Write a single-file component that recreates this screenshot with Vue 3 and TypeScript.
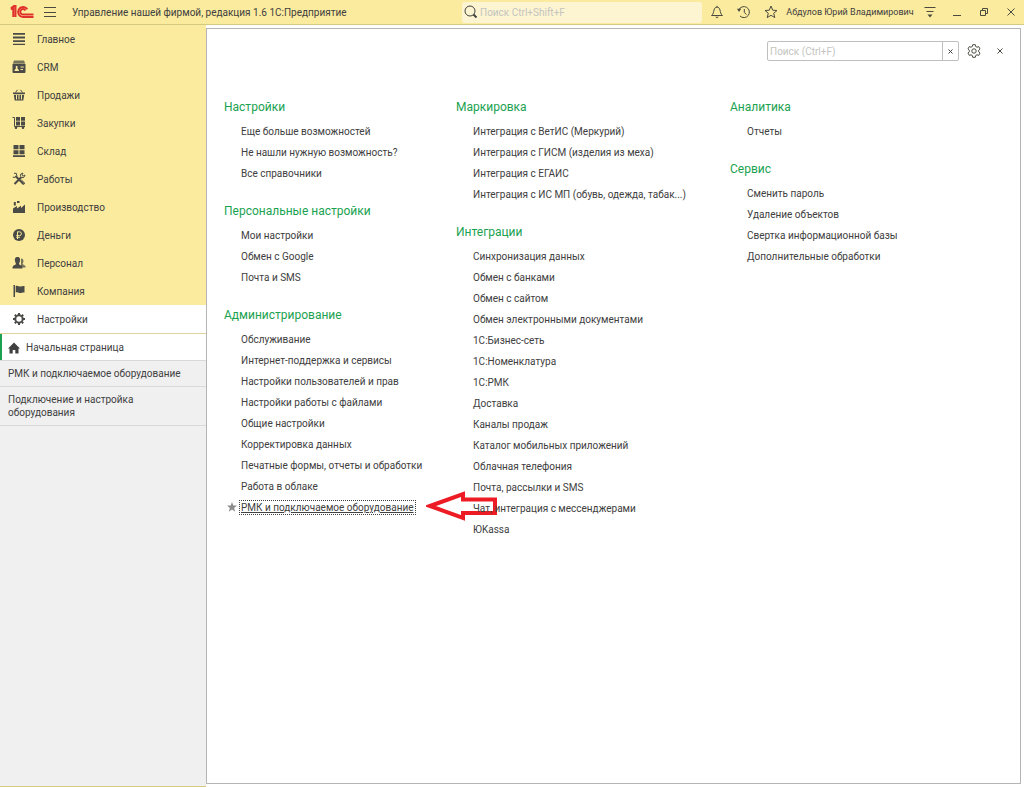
<script setup lang="ts">
import { ref } from 'vue'

interface Section {
  id: string
  title: string
}
interface Group {
  title: string
  items: string[]
}

const sections: Section[] = [
  { id: 'main', title: 'Главное' },
  { id: 'crm', title: 'CRM' },
  { id: 'sales', title: 'Продажи' },
  { id: 'purchases', title: 'Закупки' },
  { id: 'stock', title: 'Склад' },
  { id: 'works', title: 'Работы' },
  { id: 'production', title: 'Производство' },
  { id: 'money', title: 'Деньги' },
  { id: 'staff', title: 'Персонал' },
  { id: 'company', title: 'Компания' },
  { id: 'settings', title: 'Настройки' },
]

const columns: Group[][] = [
  [
    {
      title: 'Настройки',
      items: ['Еще больше возможностей', 'Не нашли нужную возможность?', 'Все справочники'],
    },
    {
      title: 'Персональные настройки',
      items: ['Мои настройки', 'Обмен с Google', 'Почта и SMS'],
    },
    {
      title: 'Администрирование',
      items: [
        'Обслуживание',
        'Интернет-поддержка и сервисы',
        'Настройки пользователей и прав',
        'Настройки работы с файлами',
        'Общие настройки',
        'Корректировка данных',
        'Печатные формы, отчеты и обработки',
        'Работа в облаке',
        'РМК и подключаемое оборудование',
      ],
    },
  ],
  [
    {
      title: 'Маркировка',
      items: [
        'Интеграция с ВетИС (Меркурий)',
        'Интеграция с ГИСМ (изделия из меха)',
        'Интеграция с ЕГАИС',
        'Интеграция с ИС МП (обувь, одежда, табак...)',
      ],
    },
    {
      title: 'Интеграции',
      items: [
        'Синхронизация данных',
        'Обмен с банками',
        'Обмен с сайтом',
        'Обмен электронными документами',
        '1С:Бизнес-сеть',
        '1С:Номенклатура',
        '1С:РМК',
        'Доставка',
        'Каналы продаж',
        'Каталог мобильных приложений',
        'Облачная телефония',
        'Почта, рассылки и SMS',
        'Чат, интеграция с мессенджерами',
        'ЮKassa',
      ],
    },
  ],
  [
    { title: 'Аналитика', items: ['Отчеты'] },
    {
      title: 'Сервис',
      items: ['Сменить пароль', 'Удаление объектов', 'Свертка информационной базы', 'Дополнительные обработки'],
    },
  ],
]

const activeSection = ref('settings')
const selectedItem = ref('РМК и подключаемое оборудование')
const globalQuery = ref('')
const commandQuery = ref('')
</script>

<template>
  <div class="app">
    <header class="topbar">
      <div class="brand">
        <svg class="logo" width="24" height="14" viewBox="0 0 24 14" aria-label="1С">
          <path d="M1 4.5L3.3 2.6V12M5.5 12V1H4L1 3.4" />
          <path d="M17.3 4.2A5 5 0 1 0 13 12H23.5" />
          <path d="M15.3 5.4A2.7 2.7 0 1 0 13 9.5H23.5" />
        </svg>
        <button class="icon-btn burger" type="button" aria-label="Меню">
          <svg width="12" height="12" viewBox="0 0 12 12"><path d="M0 1.5H12M0 6.5H12M0 10.5H12" /></svg>
        </button>
        <span class="app-title">Управление нашей фирмой, редакция 1.6 1С:Предприятие</span>
      </div>
      <label class="global-search">
        <svg width="14" height="14" viewBox="0 0 14 14">
          <circle cx="6" cy="6" r="5" />
          <path class="handle" d="M9.5 9.5L12.5 12.5" />
        </svg>
        <input v-model="globalQuery" type="text" placeholder="Поиск Ctrl+Shift+F" aria-label="Глобальный поиск" />
      </label>
      <div class="actions">
        <button class="icon-btn" type="button" aria-label="Уведомления">
          <svg width="14" height="14" viewBox="0 0 14 14">
            <path d="M1.5 10.5C3.5 9 3.5 7 4 5C4.5 3 5.5 2.2 7 2.2S9.5 3 10 5C10.5 7 10.5 9 12.5 10.5ZM7 0.8V2" />
            <path class="solid" d="M5.2 11.7H8.8L7 13.3Z" />
          </svg>
        </button>
        <button class="icon-btn" type="button" aria-label="История">
          <svg width="14" height="14" viewBox="0 0 14 14">
            <path d="M1.8 5A5.5 5.5 0 1 1 3 11M7.3 4V7.5L9.5 9.5" />
            <path class="solid" d="M0 3.8H4.2L2 7Z" />
          </svg>
        </button>
        <button class="icon-btn" type="button" aria-label="Избранное">
          <svg width="14" height="14" viewBox="0 0 14 14">
            <path d="M7 1L8.7 5.2L13 5.5L9.7 8.3L10.8 12.6L7 10.3L3.2 12.6L4.3 8.3L1 5.5L5.3 5.2Z" />
          </svg>
        </button>
        <button class="user" type="button">Абдулов Юрий Владимирович</button>
        <button class="icon-btn" type="button" aria-label="Сервис и настройки">
          <svg width="12" height="12" viewBox="0 0 12 12">
            <path d="M0.5 1.5H11.5M2.5 5.5H9.5" /><path class="solid" d="M3.5 8.5H8.5L6 11.5Z" />
          </svg>
        </button>
        <button class="icon-btn" type="button" aria-label="Свернуть">
          <svg width="8" height="12" viewBox="0 0 8 12"><path d="M0 9.5H8" /></svg>
        </button>
        <button class="icon-btn" type="button" aria-label="Восстановить">
          <svg width="8" height="8" viewBox="0 0 8 8"><path d="M0.5 2.5H5.5V7.5H0.5ZM2.5 2.5V0.5H7.5V5.5H5.5" /></svg>
        </button>
        <button class="icon-btn" type="button" aria-label="Закрыть">
          <svg width="8" height="8" viewBox="0 0 8 8"><path d="M0.5 0.5L7.5 7.5M7.5 0.5L0.5 7.5" /></svg>
        </button>
      </div>
    </header>

    <div class="body">
      <aside class="sidebar">
        <nav class="sections">
          <button
            v-for="s in sections"
            :key="s.id"
            type="button"
            class="section"
            :class="{ active: s.id === activeSection }"
            @click="activeSection = s.id"
          >
            <svg width="14" height="14" viewBox="0 0 14 14">
              <path v-if="s.id === 'main'" d="M1 1H13V2.8H1ZM1 4.6H13V6.4H1ZM1 8.2H13V10H1ZM1 11.8H13V13H1Z" />
              <template v-else-if="s.id === 'crm'">
                <path class="dim" d="M2 0.5H12L13 3H1Z" />
                <path
                  fill-rule="evenodd"
                  d="M1.5 3.5H12.5Q13.5 3.5 13.5 4.5V12Q13.5 13 12.5 13H1.5Q0.5 13 0.5 12V4.5Q0.5 3.5 1.5 3.5ZM2.5 11H7C7 9.5 6 9 5.5 8.7V6H3.8V8.7C3.2 9 2.5 9.5 2.5 11ZM8.5 6.5V7.5H11.8V6.5ZM8.5 9V10H11V9Z"
                />
              </template>
              <template v-else-if="s.id === 'sales'">
                <path d="M1 4.5H13V6H1ZM1.8 6.7H12.2L11.3 12.5H2.7Z" />
                <path class="line" d="M3.5 4.5L5.5 1.8M10.5 4.5L8.5 1.8" />
                <path class="cut" d="M4.5 7V11.5M7 7V11.5M9.5 7V11.5" />
              </template>
              <template v-else-if="s.id === 'purchases'">
                <path class="line" d="M0.5 1.5H2.5V10.5H13" />
                <path d="M4 1H8V4.8H4ZM9 1H13V4.8H9ZM4 5.6H8V9.4H4ZM9 5.6H13V9.4H9Z" />
                <circle cx="4" cy="11.7" r="1.3" /><circle cx="11" cy="11.7" r="1.3" />
              </template>
              <path
                v-else-if="s.id === 'stock'"
                d="M1.5 1H6.5V5.3H1.5ZM7.5 1H12.5V5.3H7.5ZM1.5 6.2H6.5V10.3H1.5ZM7.5 6.2H12.5V10.3H7.5ZM1 11.3H13V13H1Z"
              />
              <template v-else-if="s.id === 'works'">
                <path class="thick" d="M3.5 4L11.5 12M2.5 12L9.5 5" />
                <path
                  class="line"
                  d="M0.8 5.2L3 5.4L4.8 3.6L4.2 1.2L2 1.4M8.6 4.4C7.8 2.6 9.2 1 11 1.2L9.8 3L11 4.2L12.9 3C13 5 11.4 6.2 9.6 5.4M9.5 8L12.8 11.2L11.4 12.8"
                />
              </template>
              <template v-else-if="s.id === 'production'">
                <path d="M1 13V8.5L5 6V8.5L9 5.8V8L13 4.5V13Z" />
                <path d="M1.8 2H3.8V5.5H1.8ZM5 1H7.5V3H5Z" />
              </template>
              <template v-else-if="s.id === 'money'">
                <circle cx="7" cy="7" r="6" />
                <path class="cut" d="M5.5 11V3.8H7.5A1.9 1.9 0 0 1 7.5 7.6H4.3M4.3 9.3H8" />
              </template>
              <template v-else-if="s.id === 'staff'">
                <path class="dim" d="M9 2.5Q11.5 2 11.5 5Q11.3 7 10.5 8L13.5 10V11.5H9Z" />
                <path d="M5.5 1C8 1 8.3 3 8 5C7.8 6.5 7 7 7 8.3C8.5 9.3 10.5 9.3 10.5 12.5H0.5C0.5 9.3 2.5 9.3 4 8.3C4 7 3.2 6.5 3 5C2.7 3 3 1 5.5 1Z" />
              </template>
              <path
                v-else-if="s.id === 'company'"
                d="M1.5 1H3V13H1.5ZM3.7 2C6 1 7 3 9 2.5C10.5 2.2 11 1.8 12.5 2V8.5C10.5 8 9.5 9.5 7.5 9C6 8.500 5 8 3.7 8.7Z"
              />
              <template v-else>
                <circle class="gear-ring" cx="7" cy="7" r="3.7" />
                <path class="gear-teeth" d="M7 1V3M7 11V13M1 7H3M11 7H13M2.8 2.8L4 4M10 10L11.2 11.2M2.8 11.2L4 10M10 4L11.2 2.8" />
              </template>
            </svg>
            {{ s.title }}
          </button>
        </nav>
        <nav class="tabs">
          <button type="button" class="tab home">
            <svg width="12" height="12" viewBox="0 0 12 12">
              <path d="M6 0.5L12 6.5H10.5V11.5H7.3V8H4.7V11.5H1.5V6.5H0Z" />
            </svg>
            Начальная страница
          </button>
          <button type="button" class="tab">РМК и подключаемое оборудование</button>
          <button type="button" class="tab">Подключение и настройка оборудования</button>
        </nav>
      </aside>

      <main class="panel">
        <div class="toolbar">
          <div class="command-search">
            <input v-model="commandQuery" type="text" placeholder="Поиск (Ctrl+F)" aria-label="Поиск" />
            <button type="button" aria-label="Очистить" @click="commandQuery = ''">
              <svg width="5" height="5" viewBox="0 0 5 5"><path d="M0.5 0.5L4.5 4.5M4.5 0.5L0.5 4.5" /></svg>
            </button>
          </div>
          <button class="icon-btn tool" type="button" aria-label="Настройка">
            <svg width="14" height="14" viewBox="0 0 14 14">
              <path d="M5.7 0.7H8.3L8.7 2.5L10 3.2L11.7 2.6L13 4.9L11.7 6.2V7.8L13 9.1L11.7 11.4L10 10.8L8.7 11.5L8.3 13.3H5.7L5.3 11.5L4 10.8L2.3 11.4L1 9.1L2.3 7.8V6.2L1 4.9L2.3 2.6L4 3.2L5.3 2.5Z" />
              <circle cx="7" cy="7" r="2.2" />
            </svg>
          </button>
          <button class="icon-btn tool" type="button" aria-label="Закрыть панель">
            <svg width="6" height="6" viewBox="0 0 6 6"><path d="M0.5 0.5L5.5 5.5M5.5 0.5L0.5 5.5" /></svg>
          </button>
        </div>

        <div class="columns">
          <div v-for="(column, i) in columns" :key="i" class="column">
            <section v-for="group in column" :key="group.title" class="group">
              <h2>{{ group.title }}</h2>
              <ul>
                <li v-for="item in group.items" :key="item" :class="{ selected: item === selectedItem }">
                  <svg v-if="item === selectedItem" class="star" width="10" height="10" viewBox="0 0 10 10">
                    <path d="M5 0L6.3 3.5H10L7.1 5.9L8.2 9.7L5 7.5L1.8 9.7L2.9 5.9L0 3.5H3.7Z" />
                  </svg>
                  <a href="#" @click.prevent="selectedItem = item">{{ item }}</a>
                  <svg v-if="item === selectedItem" class="pointer" width="72" height="30" viewBox="0 0 72 30">
                    <path d="M4 15L37 3V8.5H69V22H37V27Z" />
                  </svg>
                </li>
              </ul>
            </section>
          </div>
        </div>
      </main>
    </div>
  </div>
</template>

<style>
body {
  margin: 0;
}
</style>

<style scoped>
.app {
  display: flex;
  flex-direction: column;
  box-sizing: border-box;
  min-height: 100vh;
  background: #fff;
  color: #404040;
  font-family: Roboto, 'Liberation Sans', Arial, sans-serif;
  font-size: 10px;
}
button,
input {
  margin: 0;
  padding: 0;
  border: 0;
  background: none;
  color: inherit;
  font: inherit;
}
button {
  cursor: pointer;
}
svg {
  display: block;
  flex: none;
}
.topbar {
  display: flex;
  align-items: center;
  height: 24px;
  border-bottom: 1px solid #d6ca80;
  background: #fbeb9e;
}
.brand {
  display: flex;
  flex: 1;
  align-items: center;
  padding-left: 10px;
  white-space: nowrap;
}
.logo {
  fill: none;
  stroke: #e0322c;
  stroke-width: 2;
}
.icon-btn {
  display: flex;
  align-items: center;
  justify-content: center;
  width: 27px;
  height: 24px;
}
.icon-btn svg {
  overflow: visible;
  fill: none;
  stroke: #4a4a40;
}
.icon-btn .solid {
  fill: #4a4a40;
  stroke: none;
}
.icon-btn.burger {
  width: 32px;
}
.icon-btn.tool {
  width: 26px;
}
.app-title {
  margin-left: 6px;
}
.global-search {
  display: flex;
  align-items: center;
  gap: 2px;
  box-sizing: border-box;
  width: 240px;
  height: 21px;
  padding-left: 2px;
  border-radius: 3px;
  background: #fdf5d1;
}
.global-search svg {
  fill: none;
  stroke: #404040;
}
.global-search .handle {
  stroke-width: 2;
}
.global-search input {
  flex: 1;
  min-width: 0;
  outline: none;
}
input::placeholder {
  color: #c4c4c0;
  opacity: 1;
}
.actions {
  display: flex;
  align-items: center;
  padding-left: 1px;
}
.user {
  width: 132px;
  font-size: 9px;
  white-space: nowrap;
}
.body {
  display: flex;
  flex: 1;
}
.sidebar {
  display: flex;
  flex: none;
  flex-direction: column;
  width: 206px;
  border-bottom: 1px solid #d6ca80;
  background: #f0f0f0;
}
.sections {
  display: flex;
  flex-direction: column;
  border-bottom: 1px solid #dfd59a;
  background: #fbeb9e;
}
.section {
  display: flex;
  align-items: center;
  gap: 11px;
  height: 28px;
  padding-left: 12px;
  text-align: left;
}
.section.active {
  background: #fff;
}
.section svg {
  fill: #4a4a46;
}
.section .dim {
  fill: #77745c;
}
.section .line,
.section .thick,
.section .gear-ring,
.section .gear-teeth {
  fill: none;
  stroke: #4a4a46;
}
.section .thick,
.section .gear-ring,
.section .gear-teeth {
  stroke-width: 2;
}
.section .cut {
  fill: none;
  stroke: #fbeb9e;
}
.tabs {
  display: flex;
  flex-direction: column;
}
.tab {
  padding: 6px 16px 6px 8px;
  border-bottom: 1px solid #d9d9d9;
  line-height: 13px;
  text-align: left;
}
.tab.home {
  display: flex;
  align-items: center;
  gap: 6px;
  padding-top: 7px;
  background: #fff;
  box-shadow: inset 2px 0 #1ba251;
}
.tab svg {
  fill: #404040;
}
.panel {
  flex: 1;
  min-width: 0;
  margin: 3px 3px 3px 0;
  border: 1px solid #b5b5b5;
}
.toolbar {
  display: flex;
  align-items: center;
  justify-content: flex-end;
  padding: 10px 7px 0 0;
}
.command-search {
  display: flex;
  box-sizing: border-box;
  width: 192px;
  height: 20px;
  margin-right: 2px;
  border: 1px solid #bfbfbf;
  border-radius: 2px;
}
.command-search input {
  flex: 1;
  min-width: 0;
  padding-left: 2px;
  outline: none;
}
.command-search button {
  display: flex;
  align-items: center;
  justify-content: center;
  width: 16px;
  border-left: 1px solid #bfbfbf;
}
.command-search svg {
  fill: none;
  stroke: #404040;
}
.columns {
  display: grid;
  grid-template-columns: 232px 274px 1fr;
  padding: 32px 0 0 17px;
}
.group {
  margin-bottom: 15px;
}
h2 {
  margin: 0;
  padding-bottom: 1px;
  color: #1ba251;
  font-size: 12px;
  font-weight: 400;
  line-height: 25px;
}
ul {
  margin: 0;
  padding: 0 0 0 17px;
  list-style: none;
}
li {
  position: relative;
  line-height: 21px;
  white-space: nowrap;
}
a {
  color: inherit;
  text-decoration: none;
}
.selected a {
  outline: 1px dotted #404040;
  outline-offset: 1px;
  text-decoration: underline;
}
.star {
  position: absolute;
  top: 5px;
  left: -14px;
  fill: #8c8c8c;
}
.pointer {
  position: absolute;
  top: -6px;
  left: 185px;
  fill: none;
  stroke: #ed1c24;
  stroke-width: 4;
}
</style>
